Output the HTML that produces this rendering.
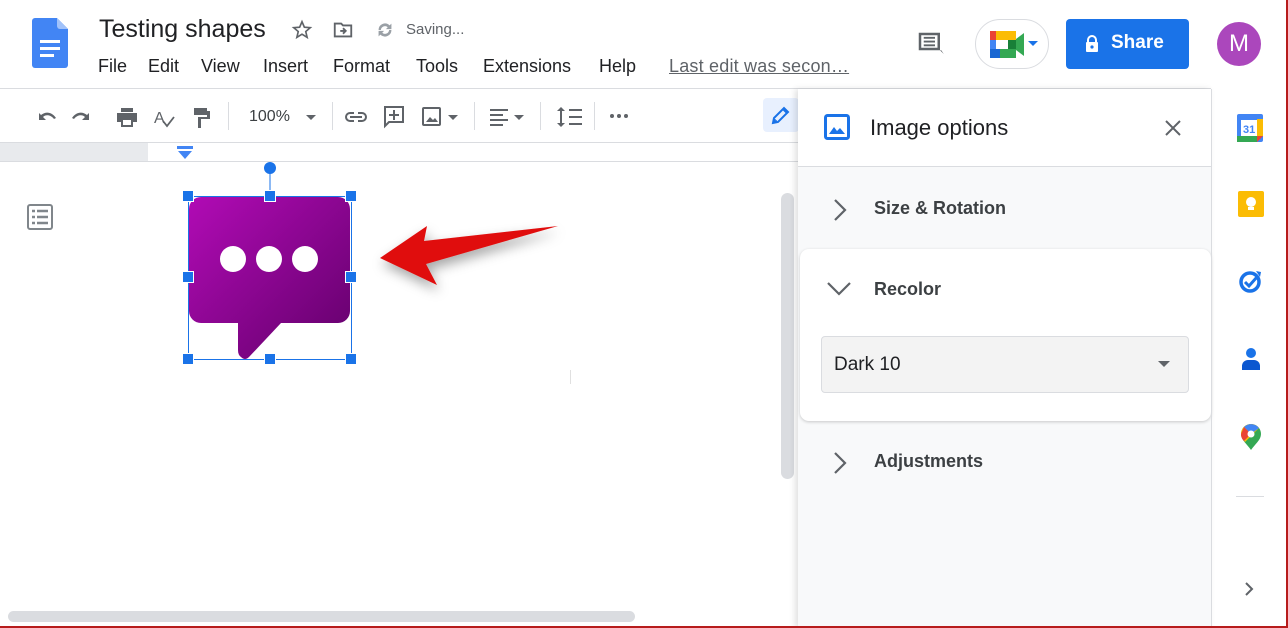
<!DOCTYPE html>
<html><head><meta charset="utf-8"><style>
*{box-sizing:border-box;margin:0;padding:0}
body{width:1288px;height:628px;overflow:hidden;background:#fff;font-family:"Liberation Sans",Arial,sans-serif;position:relative;color:#202124}
.a{position:absolute}
.menu span{position:absolute;top:56px;font-size:18px;color:#202124}
.sep{position:absolute;top:102px;width:1px;height:28px;background:#dadce0}
.h{position:absolute;width:12px;height:12px;background:#1a73e8;border:1px solid #fff}
.sec{position:absolute;left:874px;font-size:18px;font-weight:bold;color:#3c4043}
</style></head><body>
<svg class="a" style="left:32px;top:18px" width="36" height="50" viewBox="0 0 36 50"><path d="M3 0h22l11 11v36a3 3 0 0 1-3 3H3a3 3 0 0 1-3-3V3a3 3 0 0 1 3-3z" fill="#4285f4"/><path d="M25 0l11 11H28a3 3 0 0 1-3-3z" fill="#a1c2fa"/><rect x="8" y="22" width="20" height="3" fill="#fff"/><rect x="8" y="29" width="20" height="3" fill="#fff"/><rect x="8" y="36" width="14" height="3" fill="#fff"/></svg>
<div class="a" style="left:99px;top:15px;font-size:25px;color:#202124">Testing shapes</div>
<svg class="a" style="left:291px;top:19px" width="22" height="22" viewBox="0 0 24 24"><path d="M12 3l2.6 6 6.4.5-4.9 4.2 1.5 6.3L12 16.6 6.4 20l1.5-6.3L3 9.5l6.4-.5z" fill="none" stroke="#5f6368" stroke-width="1.8"/></svg>
<svg class="a" style="left:332px;top:19px" width="22" height="22" viewBox="0 0 24 24"><path d="M3 5h7l2 2h9v12H3z" fill="none" stroke="#5f6368" stroke-width="2"/><path d="M9 13h6M12 10l3 3-3 3" fill="none" stroke="#5f6368" stroke-width="2"/></svg>
<svg class="a" style="left:374px;top:19px" width="22" height="22" viewBox="0 0 24 24"><path d="M5 12a7 7 0 0 1 12-5l2-2v6h-6l2-2a4.5 4.5 0 0 0-7.5 3M19 12a7 7 0 0 1-12 5l-2 2v-6h6l-2 2a4.5 4.5 0 0 0 7.5-3" fill="#9aa0a6"/></svg>
<div class="a" style="left:406px;top:21px;font-size:15px;color:#5f6368">Saving...</div>
<div class="menu"><span style="left:98px">File</span><span style="left:148px">Edit</span><span style="left:201px">View</span><span style="left:263px">Insert</span><span style="left:333px">Format</span><span style="left:416px">Tools</span><span style="left:483px">Extensions</span><span style="left:599px">Help</span></div>
<div class="a" style="left:669px;top:56px;font-size:18px;color:#5f6368;text-decoration:underline;letter-spacing:0.2px">Last edit was secon…</div>
<svg class="a" style="left:915px;top:29px" width="30" height="30" viewBox="0 0 24 24"><path d="M3 3h17v14h1l2 3-3-3H3z" fill="#5f6368"/><rect x="5" y="5" width="13" height="10" fill="#fff"/><path d="M7 7h9M7 10h9M7 13h9" stroke="#5f6368" stroke-width="1.5"/></svg>
<div class="a" style="left:975px;top:19px;width:74px;height:50px;border:1px solid #dadce0;border-radius:25px"></div>
<svg class="a" style="left:990px;top:31px" width="34" height="27" viewBox="0 0 34 27"><rect x="0" y="0" width="10" height="9" fill="#ea4335"/><rect x="0" y="9" width="6" height="9" fill="#4285f4"/><rect x="0" y="18" width="10" height="9" fill="#1967d2"/><rect x="6" y="0" width="20" height="9" fill="#fbbc04"/><rect x="10" y="18" width="16" height="9" fill="#34a853"/><rect x="18" y="9" width="8" height="9" fill="#188038"/><path d="M26 8l8-6v23l-8-6z" fill="#34a853"/><rect x="6" y="9" width="12" height="9" fill="#fff"/></svg>
<svg class="a" style="left:1027px;top:40px" width="12" height="7"><path d="M1 1h10L6 6z" fill="#1a73e8"/></svg>
<div class="a" style="left:1066px;top:19px;width:123px;height:50px;background:#1a73e8;border-radius:4px;color:#fff;font-size:19px;font-weight:bold;padding:13px 0 0 45px">Share</div>
<svg class="a" style="left:1085px;top:35px" width="14" height="17" viewBox="0 0 14 17"><path d="M3 7V5a4 4 0 0 1 8 0v2" fill="none" stroke="#fff" stroke-width="2"/><rect x="1" y="7" width="12" height="10" rx="1" fill="#fff"/><circle cx="7" cy="12" r="1.6" fill="#1a73e8"/></svg>
<div class="a" style="left:1217px;top:22px;width:44px;height:44px;border-radius:50%;background:#ab47bc;color:#fff;font-size:24px;text-align:center;line-height:44px">M</div>
<div class="a" style="left:0;top:88px;width:1211px;height:1px;background:#dadce0"></div>
<svg class="a" style="left:36px;top:104px" width="600" height="26" viewBox="0 0 600 26" fill="#5f6368">
<path d="M3 9l2 2c5-4 11-3 15 3l-2 1c-3-4-8-5-11-2l3 3H3z"/>
<path d="M63 9l-2 2c-5-4-11-3-15 3l2 1c3-4 8-5 11-2l-3 3h7z" transform="translate(-10,0)"/>
<path d="M85 4h12v4H85zM81 9h20v9h-4v5H85v-5h-4z"/><rect x="87" y="16" width="8" height="5" fill="#fff"/>
<text x="118" y="19" font-size="16" font-family="Liberation Sans" fill="#5f6368">A</text><path d="M127 17l4 5 7-9" stroke="#5f6368" stroke-width="1.8" fill="none"/>
<path d="M158 4h13v7h-13zM171 7h3v8h-9v9h-3V13h9v-6z"/>
<text x="213" y="17" font-size="16" font-family="Liberation Sans" fill="#3c4043">100%</text>
<path d="M270 11h10l-5 5z"/>
<path d="M309 13a5 5 0 0 1 5-5h4v2h-4a3 3 0 0 0 0 6h4v2h-4a5 5 0 0 1-5-5zM322 8h4a5 5 0 0 1 0 10h-4v-2h4a3 3 0 0 0 0-6h-4zM314 12h12v2h-12z"/>
<path d="M349 3h18v15h-14l-4 4z" fill="none" stroke="#5f6368" stroke-width="2"/><path d="M357 6h2v4h4v2h-4v4h-2v-4h-4v-2h4z"/>
<rect x="387" y="4" width="17" height="17" rx="1" fill="none" stroke="#5f6368" stroke-width="2"/><path d="M390 18l4-5 3 3 2-2 3 4z"/>
<path d="M412 11h10l-5 5z"/>
<path d="M454 5h18v2h-18zM454 10h13v2h-13zM454 15h18v2h-18zM454 20h13v2h-13z"/><path d="M478 11h10l-5 5z"/>
<path d="M525 3l4 4h-3v12h3l-4 4-4-4h3V7h-3zM533 5h13v2h-13zM533 12h13v2h-13zM533 19h13v2h-13z"/>
<circle cx="576" cy="12" r="2"/><circle cx="583" cy="12" r="2"/><circle cx="590" cy="12" r="2"/>
</svg>
<div class="sep" style="left:228px"></div><div class="sep" style="left:332px"></div><div class="sep" style="left:474px"></div><div class="sep" style="left:540px"></div><div class="sep" style="left:594px"></div>
<div class="a" style="left:763px;top:98px;width:36px;height:34px;background:#e8f0fe;border-radius:4px"></div>
<svg class="a" style="left:769px;top:103px" width="24" height="24" viewBox="0 0 24 24"><path d="M4 20l1-5L15 5l4 4L9 19zM6 16l-1 3 3-1M14 6l4 4" fill="none" stroke="#1a73e8" stroke-width="2"/></svg>
<div class="a" style="left:0;top:142px;width:800px;height:1px;background:#dadce0"></div>
<div class="a" style="left:0;top:143px;width:148px;height:18px;background:#e8eaed"></div>
<div class="a" style="left:0;top:161px;width:800px;height:1px;background:#dadce0"></div>
<svg class="a" style="left:176px;top:146px" width="18" height="14"><rect x="1" y="0" width="16" height="3" fill="#4285f4"/><path d="M2 5h14l-7 8z" fill="#4285f4"/></svg>
<svg class="a" style="left:27px;top:204px" width="26" height="26" viewBox="0 0 26 26"><rect x="1" y="1" width="24" height="24" rx="2" fill="none" stroke="#80868b" stroke-width="2"/><path d="M5 7h3M10 7h11M5 13h3M10 13h11M5 19h3M10 19h11" stroke="#80868b" stroke-width="2.5"/></svg>
<svg class="a" style="left:175px;top:155px" width="400" height="220" viewBox="175 155 400 220">
<defs><linearGradient id="g" x1="0" y1="0" x2="1" y2="1"><stop offset="0" stop-color="#b10bb5"/><stop offset="1" stop-color="#62006a"/></linearGradient>
<filter id="s" x="-30%" y="-60%" width="160%" height="220%"><feDropShadow dx="2" dy="6" stdDeviation="6" flood-color="#000" flood-opacity="0.35"/></filter></defs>
<path d="M201 197h137a12 12 0 0 1 12 12v102a12 12 0 0 1-12 12h-57l-32 34q-4 4-8 0-3-2-3-7v-27h-37a12 12 0 0 1-12-12v-102a12 12 0 0 1 12-12z" fill="url(#g)"/>
<ellipse cx="233" cy="259" rx="13" ry="13" fill="#fff"/><ellipse cx="269" cy="259" rx="13" ry="13" fill="#fff"/><ellipse cx="305" cy="259" rx="13" ry="13" fill="#fff"/>
<rect x="188.5" y="196.5" width="163" height="163" fill="none" stroke="#1a73e8" stroke-width="1"/>
<line x1="270" y1="168" x2="270" y2="196" stroke="#1a73e8"/><circle cx="270" cy="168" r="6" fill="#1a73e8"/>
<path d="M380 258l47-32-3 15 134-15-132 38 11 21z" fill="#e00b0b" filter="url(#s)"/>
</svg>
<div class="h" style="left:182px;top:190px"></div><div class="h" style="left:264px;top:190px"></div><div class="h" style="left:345px;top:190px"></div>
<div class="h" style="left:182px;top:271px"></div><div class="h" style="left:345px;top:271px"></div>
<div class="h" style="left:182px;top:353px"></div><div class="h" style="left:264px;top:353px"></div><div class="h" style="left:345px;top:353px"></div>
<div class="a" style="left:570px;top:370px;width:1px;height:14px;background:#e0e0e0"></div>
<div class="a" style="left:781px;top:193px;width:13px;height:286px;background:#dadce0;border-radius:7px"></div>
<div class="a" style="left:8px;top:611px;width:627px;height:11px;background:#dadce0;border-radius:6px"></div>
<div class="a" style="left:798px;top:89px;width:414px;height:539px;background:#f8f9fa;box-shadow:-3px 0 6px rgba(0,0,0,.12)"></div>
<div class="a" style="left:798px;top:89px;width:414px;height:78px;background:#fff;border-bottom:1px solid #dadce0"></div>
<svg class="a" style="left:824px;top:114px" width="26" height="26" viewBox="0 0 26 26"><rect x="1.5" y="1.5" width="23" height="23" rx="2" fill="none" stroke="#1a73e8" stroke-width="3"/><path d="M5 20l5-7 3 4 3-3 5 6z" fill="#1a73e8"/></svg>
<div class="a" style="left:870px;top:115px;font-size:22px;color:#202124">Image options</div>
<svg class="a" style="left:1164px;top:119px" width="18" height="18"><path d="M2 2l14 14M16 2L2 16" stroke="#5f6368" stroke-width="2"/></svg>
<svg class="a" style="left:832px;top:198px" width="16" height="24"><path d="M3 2l10 10-10 10" fill="none" stroke="#5f6368" stroke-width="2.2"/></svg>
<div class="sec" style="top:198px">Size &amp; Rotation</div>
<div class="a" style="left:800px;top:249px;width:411px;height:172px;background:#fff;border-radius:9px;box-shadow:0 1px 3px rgba(0,0,0,.2)"></div>
<svg class="a" style="left:826px;top:280px" width="26" height="18"><path d="M2 3l11 11L24 3" fill="none" stroke="#5f6368" stroke-width="2.2"/></svg>
<div class="sec" style="top:279px">Recolor</div>
<div class="a" style="left:821px;top:336px;width:368px;height:57px;background:#f3f3f3;border:1px solid #dadce0;border-radius:4px;font-size:19px;color:#202124;padding:17px 0 0 12px">Dark 10</div>
<svg class="a" style="left:1157px;top:360px" width="14" height="8"><path d="M1 1h12L7 7z" fill="#5f6368"/></svg>
<svg class="a" style="left:832px;top:451px" width="16" height="24"><path d="M3 2l10 10-10 10" fill="none" stroke="#5f6368" stroke-width="2.2"/></svg>
<div class="sec" style="top:451px">Adjustments</div>
<div class="a" style="left:1211px;top:89px;width:1px;height:539px;background:#dadce0"></div>
<svg class="a" style="left:1237px;top:114px" width="26" height="28" viewBox="0 0 26 28"><rect x="0" y="0" width="26" height="28" rx="2" fill="#4285f4"/><rect x="0" y="22" width="20" height="6" fill="#34a853"/><rect x="20" y="5" width="6" height="17" fill="#fbbc04"/><path d="M20 22h6l-6 6z" fill="#ea4335"/><rect x="4" y="6" width="16" height="16" fill="#fff"/><text x="6" y="19" font-size="11" font-weight="bold" fill="#4285f4" font-family="Liberation Sans">31</text></svg>
<div class="a" style="left:1238px;top:191px;width:26px;height:26px;background:#fbbc04;border-radius:2px"></div>
<svg class="a" style="left:1243px;top:195px" width="16" height="18"><circle cx="8" cy="7" r="5" fill="#fff"/><rect x="5" y="12" width="6" height="3" fill="#fff"/></svg>
<svg class="a" style="left:1238px;top:268px" width="26" height="26" viewBox="0 0 26 26"><circle cx="12" cy="14" r="9" fill="none" stroke="#1a73e8" stroke-width="3.5"/><path d="M7 14l4 4 8-9" fill="none" stroke="#1a73e8" stroke-width="3"/><path d="M18 3l5 1-1 5z" fill="#1a73e8"/></svg>
<svg class="a" style="left:1240px;top:346px" width="22" height="26"><circle cx="11" cy="7" r="5" fill="#1a73e8"/><path d="M2 24v-4a6 6 0 0 1 6-6h6a6 6 0 0 1 6 6v4z" fill="#0b57d0"/></svg>
<svg class="a" style="left:1241px;top:424px" width="20" height="26" viewBox="0 0 20 26"><path d="M10 0a10 10 0 0 1 10 10c0 6-6 10-10 16C6 20 0 16 0 10A10 10 0 0 1 10 0z" fill="#34a853"/><path d="M10 0a10 10 0 0 1 8 4L4 18C2 15 0 13 0 10A10 10 0 0 1 10 0z" fill="#fbbc04"/><path d="M3 3a10 10 0 0 1 15 1l-8 6z" fill="#4285f4"/><path d="M3 3L0 10c0 3 1 5 3 7l7-7z" fill="#ea4335"/><circle cx="10" cy="10" r="3.5" fill="#fff"/></svg>
<div class="a" style="left:1236px;top:496px;width:28px;height:1px;background:#dadce0"></div>
<svg class="a" style="left:1244px;top:581px" width="12" height="16"><path d="M2 2l6 6-6 6" fill="none" stroke="#5f6368" stroke-width="2"/></svg>
<div class="a" style="left:1286px;top:0;width:2px;height:628px;background:#b71c1c"></div>
<div class="a" style="left:0;top:626px;width:1288px;height:2px;background:#b71c1c"></div>
</body></html>
